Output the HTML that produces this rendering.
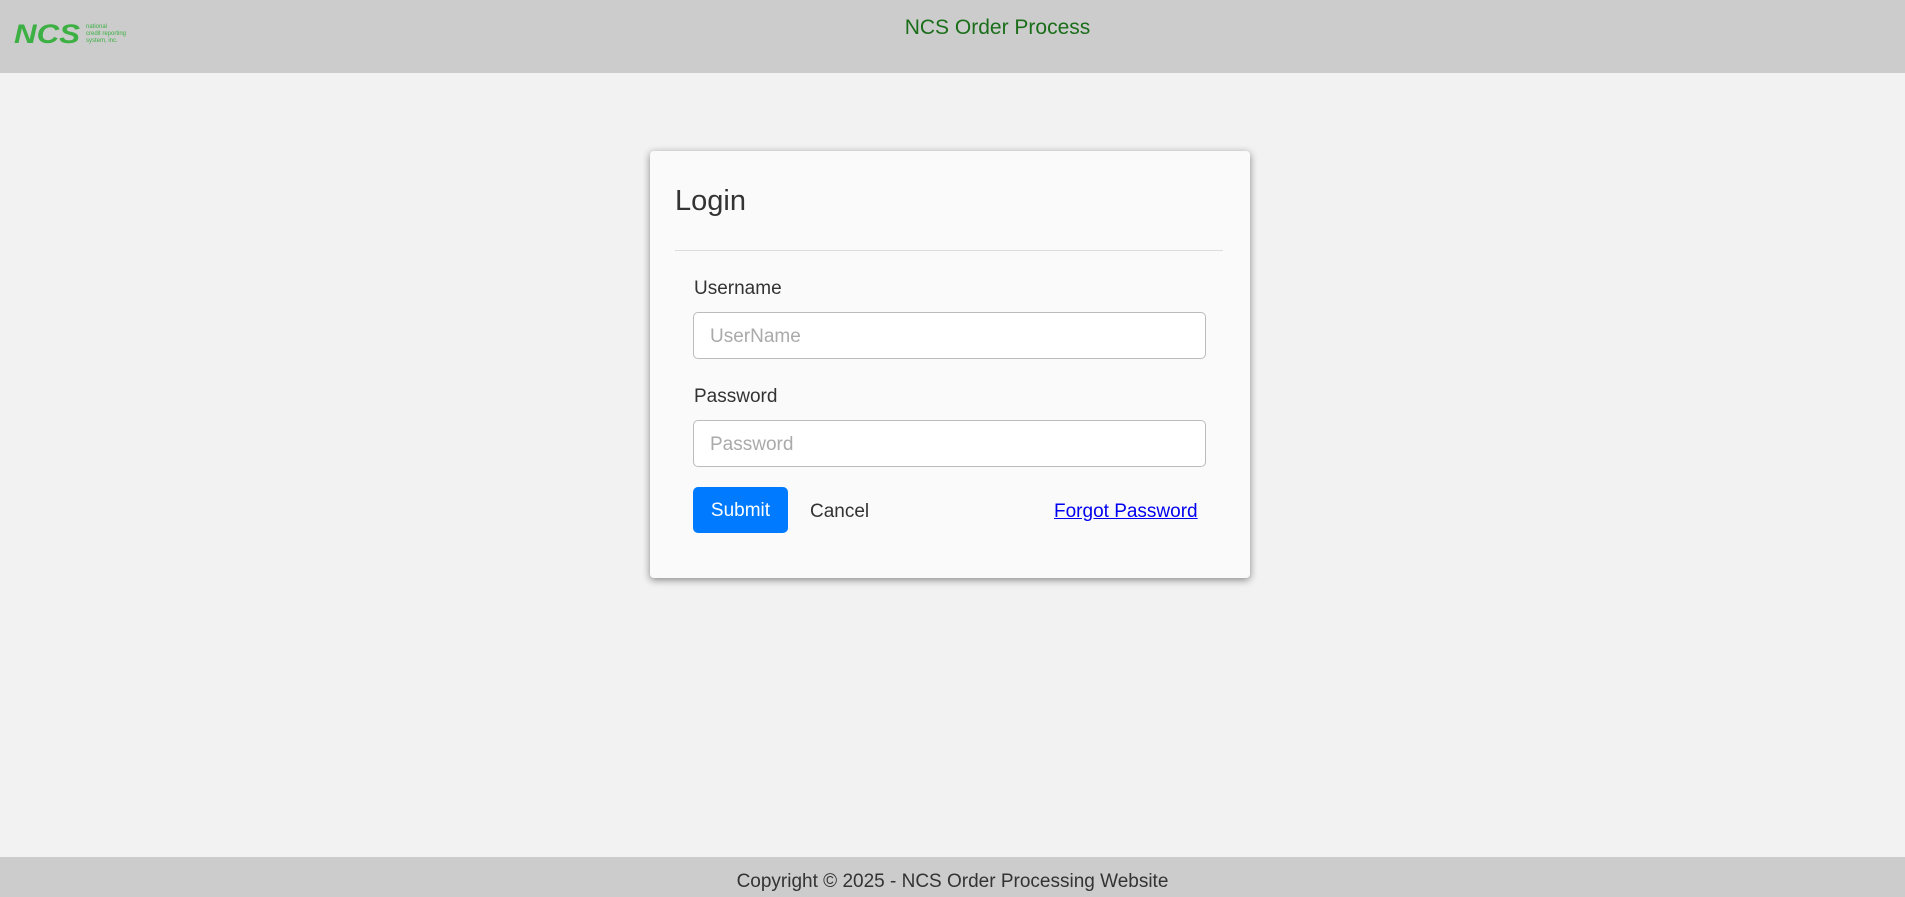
<!DOCTYPE html>
<html><head><style>
html,body{margin:0;width:1905px;height:897px;overflow:hidden}
body{background:#f2f2f2;font-family:"Liberation Sans",sans-serif;position:relative;color:#333}
.hdr{position:absolute;left:0;top:0;width:1905px;height:73px;background:#cccccc}
.title{position:absolute;left:0;width:1995px;text-align:center;top:16px;font-size:21px;color:#1a6e1a}
.card{position:absolute;left:650px;top:151px;width:600px;height:427px;background:#fafafa;border-radius:4px;box-shadow:0 2px 8px rgba(0,0,0,.45)}
.abs{position:absolute}
.inp{position:absolute;left:43px;width:513px;height:47px;border:1px solid #bbb;border-radius:5px;background:#fff;box-sizing:border-box;padding-left:16px;line-height:47px;font-size:19px;color:#aaa}
.lbl{position:absolute;left:44px;font-size:19px;color:#333}
.ftr{position:absolute;left:0;top:857px;width:1905px;height:40px;background:#cccccc;text-align:center;font-size:19px;line-height:50px;color:#333}
</style></head><body>
<div class="hdr">
<svg class="abs" style="left:12px;top:18px" width="120" height="30" viewBox="0 0 120 30">
<text x="2" y="25" font-family="Liberation Sans" font-weight="bold" font-style="italic" font-size="27" fill="#3cb043" textLength="66" lengthAdjust="spacingAndGlyphs">NCS</text>
<text x="74" y="10" font-size="6" fill="#3cb043">national</text>
<text x="74" y="17" font-size="6" fill="#3cb043">credit reporting</text>
<text x="74" y="24" font-size="6" fill="#3cb043">system, inc.</text>
</svg>
<div class="title">NCS Order Process</div>
</div>
<div class="card">
<div class="abs" style="left:25px;top:34px;font-size:29px;color:#333">Login</div>
<div class="abs" style="left:25px;top:99px;width:548px;height:1px;background:#ddd"></div>
<div class="lbl" style="top:127px">Username</div>
<div class="inp" style="top:161px">UserName</div>
<div class="lbl" style="top:235px">Password</div>
<div class="inp" style="top:269px">Password</div>
<div class="abs" style="left:43px;top:336px;width:95px;height:46px;background:#007bff;border-radius:5px;color:#fff;font-size:19px;text-align:center;line-height:48px">Submit</div>
<div class="abs" style="left:160px;top:350px;font-size:19px">Cancel</div>
<div class="abs" style="left:404px;top:350px;font-size:19px;color:#0000ee;text-decoration:underline">Forgot Password</div>
</div>
<div class="ftr">Copyright © 2025 - NCS Order Processing Website</div>
</body></html>
